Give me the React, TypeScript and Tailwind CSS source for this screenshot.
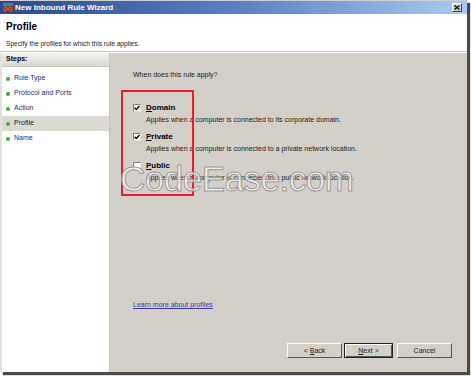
const steps = ["Rule Type", "Protocol and Ports", "Action", "Profile", "Name"];

const profiles = [
  {
    key: "D",
    rest: "omain",
    checked: true,
    text: "Applies when a computer is connected to its corporate domain.",
  },
  {
    key: "P",
    rest: "rivate",
    checked: true,
    text: "Applies when a computer is connected to a private network location.",
  },
  {
    key: "P",
    rest: "ublic",
    checked: false,
    text: "Applies when a computer is connected to a public network location.",
  },
];

function Checkbox({ checked }: { checked: boolean }) {
  return (
    <span className="w-[8px] h-[8px] bg-white border border-t-[#808080] border-l-[#808080] border-b-[#e8e8e8] border-r-[#e8e8e8] flex items-center justify-center shrink-0">
      {checked && (
        <svg width="6" height="6" viewBox="0 0 6 6">
          <path d="M0.5 2.8 L2.2 4.5 L5.5 1" stroke="#000" strokeWidth="1.3" fill="none" />
        </svg>
      )}
    </span>
  );
}

function WinButton({
  children,
  className,
  primary,
}: {
  children: React.ReactNode;
  className?: string;
  primary?: boolean;
}) {
  return (
    <button
      className={
        "h-[15px] bg-[#d4d0c8] text-[7px] leading-none text-[#222] flex items-center justify-center " +
        (primary
          ? "border border-[#222] shadow-[inset_1px_1px_0_#fff,inset_-1px_-1px_0_#555] "
          : "border border-t-white border-l-white border-b-[#555] border-r-[#555] ") +
        (className ?? "")
      }
    >
      {children}
    </button>
  );
}

export default function App() {
  return (
    <div className="w-[471px] h-[376px] bg-white relative overflow-hidden font-['Liberation_Sans',Arial,sans-serif]">
      <div className="w-[467px] h-[372px] flex flex-col bg-[#d4d0c8] shadow-[3px_3px_1px_#4a4a4a]">
        {/* title bar */}
        <div className="h-[13px] mt-[1px] flex items-center px-[3px] bg-gradient-to-r from-[#2a4a8c] via-[#5b7fbf] to-[#a9cbf0]">
          <svg width="10" height="9" viewBox="0 0 10 9" className="shrink-0">
            <rect x="0" y="0" width="10" height="9" fill="#8b2a1c" />
            <rect x="0" y="0" width="10" height="3" fill="#2f8f9a" />
            <path d="M0 5 H10 M0 7 H10 M3 3 V5 M7 3 V5 M5 5 V7 M2 7 V9 M8 7 V9" stroke="#d8906a" strokeWidth="0.6" />
          </svg>
          <span className="ml-[2px] text-white text-[8px] font-bold leading-none">New Inbound Rule Wizard</span>
          <span className="ml-auto mr-[2px] w-[10px] h-[9px] bg-[#d4d0c8] border border-t-white border-l-white border-b-[#404040] border-r-[#404040] flex items-center justify-center">
            <svg width="6" height="5" viewBox="0 0 6 5">
              <path d="M0.5 0.5 L5.5 4.5 M5.5 0.5 L0.5 4.5" stroke="#000" strokeWidth="1.2" />
            </svg>
          </span>
        </div>

        {/* header */}
        <div className="h-[38px] bg-white px-[6px] pt-[7px] border-b border-[#c8c5bd]">
          <div className="text-[10px] font-bold leading-[12px] text-black">Profile</div>
          <div className="mt-[7px] text-[6.6px] leading-[8px] text-[#222]">
            Specify the profiles for which this rule applies.
          </div>
        </div>

        {/* body */}
        <div className="flex-1 flex border-t border-white">
          <div className="w-[110px] bg-white border-r border-[#c8c5bd] border-l-2 border-l-[#e4e2dc]">
            <div className="h-[14px] flex items-center px-[4px] bg-gradient-to-b from-[#f2f1ec] to-[#dcd9d1] border-b border-[#c8c5bd] text-[7px] font-bold text-black">
              Steps:
            </div>
            <div className="mt-[4px] flex flex-col">
              {steps.map((s) => (
                <div
                  key={s}
                  className={
                    "h-[15px] flex items-center pl-[4px] gap-[4px] text-[7px] " +
                    (s === "Profile" ? "bg-[#dcd9d2] text-[#222]" : "text-[#2a2a7a]")
                  }
                >
                  <span className="w-[4px] h-[4px] rounded-full bg-[#3fae3a]" />
                  <span>{s}</span>
                </div>
              ))}
            </div>
          </div>

          <div className="flex-1 flex flex-col pl-[23px] pt-[17px] pr-[15px] pb-[14px] text-[7px] text-[#222]">
            <div className="h-[10px] leading-[10px]">When does this rule apply?</div>
            <div className="mt-[23px] flex flex-col gap-[7px]">
              {profiles.map((p, i) => (
                <div key={i} className="flex flex-col gap-[2px]">
                  <div className="h-[10px] flex items-center gap-[5px]">
                    <Checkbox checked={p.checked} />
                    <span className="text-[8px] font-bold text-black">
                      <span className="underline">{p.key}</span>
                      {p.rest}
                    </span>
                  </div>
                  <div className="h-[10px] leading-[10px] pl-[13px]">{p.text}</div>
                </div>
              ))}
            </div>
            <div className="mt-[117px] h-[10px] leading-[10px] text-[#3a3a9c] underline">
              Learn more about profiles
            </div>
            <div className="mt-auto flex justify-end">
              <WinButton className="w-[55px]">
                &lt; <span className="underline ml-[2px]">B</span>ack
              </WinButton>
              <WinButton primary className="w-[49px] ml-[2px]">
                <span className="underline">N</span>ext &gt;
              </WinButton>
              <WinButton className="w-[55px] ml-[4px]">Cancel</WinButton>
            </div>
          </div>
        </div>
      </div>

      {/* annotation box */}
      <div className="absolute left-[121px] top-[90px] w-[73px] h-[106px] border-2 border-[#e0222a]" />

      {/* watermark */}
      <div className="absolute left-[120px] top-[161px] text-[35px] leading-none tracking-[-0.5px] text-white/70 [-webkit-text-stroke:1px_#9a9a9a]">
        CodeEase.com
      </div>
    </div>
  );
}
